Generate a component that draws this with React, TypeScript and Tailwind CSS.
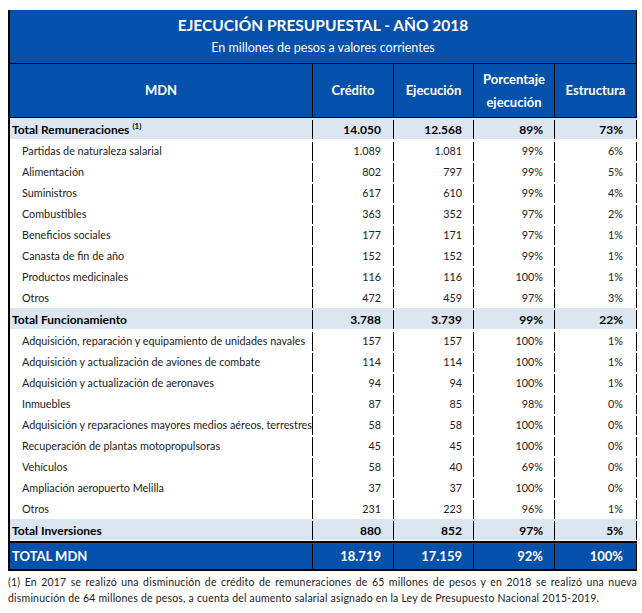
type Row = {
  label: string;
  credito: string;
  ejecucion: string;
  porcentaje: string;
  estructura: string;
  kind?: "total" | "grand";
  note?: boolean;
};

const rows: Row[] = [
  { label: "Total Remuneraciones", credito: "14.050", ejecucion: "12.568", porcentaje: "89%", estructura: "73%", kind: "total", note: true },
  { label: "Partidas de naturaleza salarial", credito: "1.089", ejecucion: "1.081", porcentaje: "99%", estructura: "6%" },
  { label: "Alimentación", credito: "802", ejecucion: "797", porcentaje: "99%", estructura: "5%" },
  { label: "Suministros", credito: "617", ejecucion: "610", porcentaje: "99%", estructura: "4%" },
  { label: "Combustibles", credito: "363", ejecucion: "352", porcentaje: "97%", estructura: "2%" },
  { label: "Beneficios sociales", credito: "177", ejecucion: "171", porcentaje: "97%", estructura: "1%" },
  { label: "Canasta de fin de año", credito: "152", ejecucion: "152", porcentaje: "99%", estructura: "1%" },
  { label: "Productos medicinales", credito: "116", ejecucion: "116", porcentaje: "100%", estructura: "1%" },
  { label: "Otros", credito: "472", ejecucion: "459", porcentaje: "97%", estructura: "3%" },
  { label: "Total Funcionamiento", credito: "3.788", ejecucion: "3.739", porcentaje: "99%", estructura: "22%", kind: "total" },
  { label: "Adquisición, reparación y equipamiento de unidades navales", credito: "157", ejecucion: "157", porcentaje: "100%", estructura: "1%" },
  { label: "Adquisición y actualización de aviones de combate", credito: "114", ejecucion: "114", porcentaje: "100%", estructura: "1%" },
  { label: "Adquisición y actualización de aeronaves", credito: "94", ejecucion: "94", porcentaje: "100%", estructura: "1%" },
  { label: "Inmuebles", credito: "87", ejecucion: "85", porcentaje: "98%", estructura: "0%" },
  { label: "Adquisición y reparaciones mayores medios aéreos, terrestres", credito: "58", ejecucion: "58", porcentaje: "100%", estructura: "0%" },
  { label: "Recuperación de plantas motopropulsoras", credito: "45", ejecucion: "45", porcentaje: "100%", estructura: "0%" },
  { label: "Vehículos", credito: "58", ejecucion: "40", porcentaje: "69%", estructura: "0%" },
  { label: "Ampliación aeropuerto Melilla", credito: "37", ejecucion: "37", porcentaje: "100%", estructura: "0%" },
  { label: "Otros", credito: "231", ejecucion: "223", porcentaje: "96%", estructura: "1%" },
  { label: "Total Inversiones", credito: "880", ejecucion: "852", porcentaje: "97%", estructura: "5%", kind: "total" },
];

const gridCols = "grid grid-cols-[303px_81px_80px_81px_82px]";
const cell = "border-r border-black flex items-center";

function DataRow({ row }: { row: Row }) {
  const isTotal = row.kind === "total";
  const rowClass = isTotal
    ? "h-[22px] pt-[2px] bg-[#dce6f1] font-bold text-[12px] text-black border-b border-white"
    : "h-[21px] pt-[2px] text-[10.8px] text-[#222]";
  return (
    <div className={`${gridCols} ${rowClass}`}>
      <div className={`${cell} ${isTotal ? "pl-[2px]" : "pl-[12px]"} whitespace-nowrap`}>
        {row.label}
        {row.note && <sup className="ml-[3px] text-[8px] font-bold">(1)</sup>}
      </div>
      <div className={`${cell} justify-end pr-3`}>{row.credito}</div>
      <div className={`${cell} justify-end pr-[11px]`}>{row.ejecucion}</div>
      <div className={`${cell} justify-end pr-[11px]`}>{row.porcentaje}</div>
      <div className={`${cell} justify-end pr-[13px]`}>{row.estructura}</div>
    </div>
  );
}

export default function App() {
  return (
    <div className="w-[642px] h-[613px] bg-white pl-2 pt-[10px] font-['Lato',sans-serif]">
      <div className="w-[629px] border-l-2 border-black">
        {/* title */}
        <div className="h-[54px] bg-[#0451ab] border-b border-r border-black flex flex-col items-center text-white">
          <div className="mt-[3px] text-[15.5px] font-bold leading-[24px]">EJECUCIÓN PRESUPUESTAL - AÑO 2018</div>
          <div className="mt-[1px] text-[12.5px] leading-[20px]">En millones de pesos a valores corrientes</div>
        </div>

        {/* column header */}
        <div className={`${gridCols} h-[54px] bg-[#0451ab] border-b border-black text-white font-bold text-[13px]`}>
          <div className={`${cell} justify-center`}>MDN</div>
          <div className={`${cell} justify-center`}>Crédito</div>
          <div className={`${cell} justify-center`}>Ejecución</div>
          <div className={`${cell} flex-col justify-center text-center leading-[23px]`}>
            <span>Porcentaje</span>
            <span>ejecución</span>
          </div>
          <div className={`${cell} justify-center`}>Estructura</div>
        </div>

        {rows.map((r, i) => (
          <DataRow key={i} row={r} />
        ))}

        {/* grand total */}
        <div className={`${gridCols} h-[30px] pt-[1px] bg-[#0451ab] border-t-2 border-b-2 border-black text-white font-bold text-[13px]`}>
          <div className={`${cell} pl-[2px]`}>TOTAL MDN</div>
          <div className={`${cell} justify-end pr-3`}>18.719</div>
          <div className={`${cell} justify-end pr-[11px]`}>17.159</div>
          <div className={`${cell} justify-end pr-[11px]`}>92%</div>
          <div className={`${cell} justify-end pr-[13px]`}>100%</div>
        </div>
      </div>

      {/* footnote */}
      <p className="w-[629px] mt-[3px] text-[10.5px] leading-[16px] text-[#222] text-justify [text-align-last:left] tracking-[0.2px]">
        (1) En 2017 se realizó una disminución de crédito de remuneraciones de 65 millones de pesos y en 2018 se realizó una nueva
        disminución de 64 millones de pesos, a cuenta del aumento salarial asignado en la Ley de Presupuesto Nacional 2015-2019.
      </p>
    </div>
  );
}
